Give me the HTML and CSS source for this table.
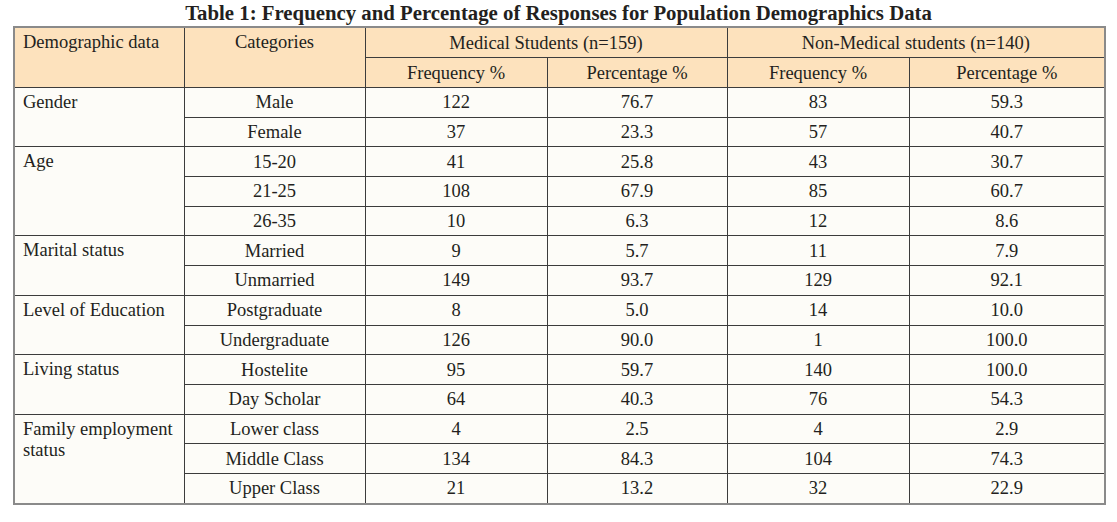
FILE: index.html
```html
<!DOCTYPE html>
<html>
<head>
<meta charset="utf-8">
<link rel="stylesheet" href="styles.css">
</head>
<body>
<div class="page">
  <h1 class="title">Table 1: Frequency and Percentage of Responses for Population Demographics Data</h1>
  <table class="data">
    <colgroup>
      <col class="c1"><col class="c2"><col class="c3"><col class="c4"><col class="c5"><col class="c6">
    </colgroup>
    <thead>
      <tr class="h1">
        <th rowspan="2" class="left top">Demographic data</th>
        <th rowspan="2" class="top">Categories</th>
        <th colspan="2">Medical Students (n=159)</th>
        <th colspan="2">Non-Medical students (n=140)</th>
      </tr>
      <tr class="h2">
        <th>Frequency %</th><th>Percentage %</th><th>Frequency %</th><th>Percentage %</th>
      </tr>
    </thead>
    <tbody>
      <tr><td rowspan="2" class="left top">Gender</td><td>Male</td><td>122</td><td>76.7</td><td>83</td><td>59.3</td></tr>
      <tr><td>Female</td><td>37</td><td>23.3</td><td>57</td><td>40.7</td></tr>
      <tr><td rowspan="3" class="left top">Age</td><td>15-20</td><td>41</td><td>25.8</td><td>43</td><td>30.7</td></tr>
      <tr><td>21-25</td><td>108</td><td>67.9</td><td>85</td><td>60.7</td></tr>
      <tr><td>26-35</td><td>10</td><td>6.3</td><td>12</td><td>8.6</td></tr>
      <tr><td rowspan="2" class="left top">Marital status</td><td>Married</td><td>9</td><td>5.7</td><td>11</td><td>7.9</td></tr>
      <tr><td>Unmarried</td><td>149</td><td>93.7</td><td>129</td><td>92.1</td></tr>
      <tr><td rowspan="2" class="left top">Level of Education</td><td>Postgraduate</td><td>8</td><td>5.0</td><td>14</td><td>10.0</td></tr>
      <tr><td>Undergraduate</td><td>126</td><td>90.0</td><td>1</td><td>100.0</td></tr>
      <tr><td rowspan="2" class="left top">Living status</td><td>Hostelite</td><td>95</td><td>59.7</td><td>140</td><td>100.0</td></tr>
      <tr><td>Day Scholar</td><td>64</td><td>40.3</td><td>76</td><td>54.3</td></tr>
      <tr><td rowspan="3" class="left top wrap">Family employment status</td><td>Lower class</td><td>4</td><td>2.5</td><td>4</td><td>2.9</td></tr>
      <tr><td>Middle Class</td><td>134</td><td>84.3</td><td>104</td><td>74.3</td></tr>
      <tr><td>Upper Class</td><td>21</td><td>13.2</td><td>32</td><td>22.9</td></tr>
    </tbody>
  </table>
</div>
</body>
</html>
```

FILE: styles.css
```css
html, body {
  margin: 0;
  padding: 0;
  background: #ffffff;
}
body {
  font-family: "Liberation Serif", "Times New Roman", serif;
  color: #231f20;
}
.page {
  padding: 0 13px 0 13px;
}
.title {
  margin: 0;
  height: 26px;
  font-size: 20.8px;
  font-weight: bold;
  text-align: center;
  line-height: 26px;
}
.data {
  border-collapse: collapse;
  table-layout: fixed;
  width: 1091px;
  font-size: 18.5px;
  border: 2px solid #8a8a8a;
}
.c1 { width: 170px; }
.c2 { width: 181px; }
.c3 { width: 182px; }
.c4 { width: 180px; }
.c5 { width: 182px; }
.c6 { width: 196px; }
.data th, .data td {
  border: 1px solid #3c3c3c;
  padding: 0 8px;
  text-align: center;
  font-weight: normal;
  line-height: 20px;
  white-space: nowrap;
}
.data thead th {
  background: #fde2bd;
}
.data tbody td {
  background: #fdfcf8;
}
.data .h1 th { height: 29px; }
.data .h2 th { height: 29px; }
.data tbody tr { height: 29.7px; }
.data tbody td { height: 28.7px; }
.data .left {
  text-align: left;
}
.data .top {
  vertical-align: top;
  padding-top: 4px;
}
.data .wrap {
  white-space: normal;
  line-height: 21px;
}
```
